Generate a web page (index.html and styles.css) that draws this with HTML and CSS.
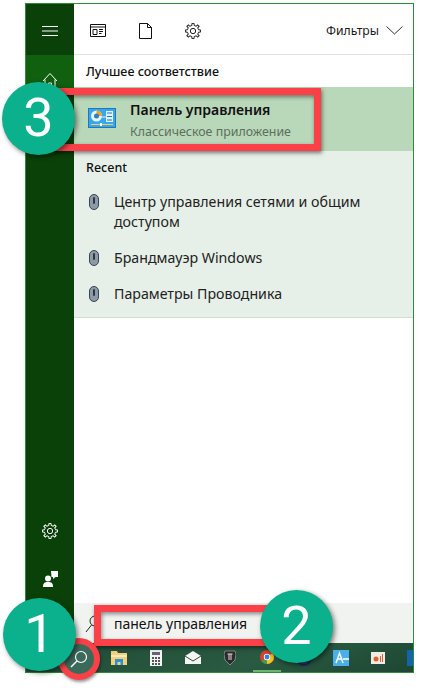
FILE: index.html
```html
<!DOCTYPE html>
<html lang="ru">
<head>
    <meta charset="UTF-8">
    <meta name="viewport" content="width=device-width, initial-scale=1.0">
    <title>Поиск</title>
    <link rel="stylesheet" href="styles.css">
</head>
<body>
    <div class="window">
        <div class="main">
            <!-- Левая панель -->
            <aside class="sidebar">
                <div class="side-menu">
                    <svg width="16" height="10" viewBox="0 0 16 10"><path d="M0 .5h16M0 5h16M0 9.500h16" stroke="#fff" fill="none"/></svg>
                </div>
                <div class="side-home">
                    <svg width="16" height="18" viewBox="0 0 16 18"><path d="M1 9 8 1.500 15 9M3 7.500V17h10V7.500M6.500 17v-6h3v6" stroke="#fff" fill="none"/></svg>
                </div>
                <div class="side-fill"></div>
                <div class="side-bottom">
                    <svg class="gear" width="16" height="16" viewBox="0 0 24 24"><use href="#gear"/></svg>
                    <svg class="feedback" width="15" height="16" viewBox="0 0 15 16"><circle cx="5" cy="7.500" r="3" fill="#fff"/><path d="M0 16c0-4 1.500-5 5-5s5 1 5 5z" fill="#fff"/><path d="M8 0h7v6h-2.500L10 8V6H8.500z" fill="#fff"/></svg>
                </div>
            </aside>

            <section class="content">
                <header class="tabs">
                    <svg class="tab-icon" width="16" height="13" viewBox="0 0 16 13"><path d="M.5.500h15v12H.5zM.5 3h15M3 5.500h4v5H3zM9 5.500h4M9 7.500h4M9 9.500h2.500" stroke="#111" fill="none"/></svg>
                    <svg class="tab-icon" width="13" height="16" viewBox="0 0 13 16"><path d="M.5.500h8l4 4v11H.5zM8.500.500v4h4" stroke="#111" fill="none"/></svg>
                    <svg class="tab-icon" width="16" height="16" viewBox="0 0 24 24"><use href="#gear-dark"/></svg>
                    <div class="filters">
                        <span>Фильтры</span>
                        <svg width="17" height="9" viewBox="0 0 17 9"><path d="M.5.500 8.500 8 16.500.500" stroke="#333" fill="none"/></svg>
                    </div>
                </header>

                <h2 class="best-title">Лучшее соответствие</h2>
                <div class="best-row">
                    <svg class="app-icon" width="28" height="20" viewBox="0 0 28 20">
                        <rect x=".5" y=".5" width="27" height="19" fill="#39a5ea" stroke="#1c78c0"/>
                        <circle cx="8.500" cy="8" r="5.500" fill="#e8f5fd"/>
                        <path d="M8.500 8V2.500A5.500 5.500 0 0 1 14 8z" fill="#f2a31c"/>
                        <circle cx="8.500" cy="8" r="2.500" fill="#2d7fc8"/>
                        <rect x="18" y="3" width="7" height="11" fill="#dff1fd"/>
                        <path d="M19 5h5M19 8.500h5M19 12h5" stroke="#2378bd"/>
                        <path d="M14 9h4" stroke="#dff1fd"/>
                        <path d="M3 16.500h22" stroke="#f4d35c"/>
                        <rect x="12" y="15" width="2" height="3" fill="#fff"/>
                    </svg>
                    <div class="best-text">
                        <div class="best-name">Панель управления</div>
                        <div class="best-type">Классическое приложение</div>
                    </div>
                </div>

                <div class="recent">
                    <h2 class="recent-title">Recent</h2>
                    <div class="recent-item">
                        <svg class="mouse" width="10" height="16" viewBox="0 0 10 16"><use href="#mouse"/></svg>
                        <span>Центр управления сетями и общим доступом</span>
                    </div>
                    <div class="recent-item">
                        <svg class="mouse" width="10" height="16" viewBox="0 0 10 16"><use href="#mouse"/></svg>
                        <span>Брандмауэр Windows</span>
                    </div>
                    <div class="recent-item">
                        <svg class="mouse" width="10" height="16" viewBox="0 0 10 16"><use href="#mouse"/></svg>
                        <span>Параметры Проводника</span>
                    </div>
                </div>

                <div class="content-fill"></div>

                <div class="search-box">
                    <svg width="16" height="20" viewBox="0 0 16 20"><circle cx="10" cy="7" r="5" stroke="#222" fill="none"/><path d="M6.500 11 1 18" stroke="#222" fill="none"/></svg>
                    <span>панель управления</span>
                </div>
            </section>
        </div>

        <!-- Панель задач -->
        <footer class="taskbar">
            <div class="task-search"></div>
            <svg class="task-icon" width="16" height="15" viewBox="0 0 16 15"><path d="M0 1h6l1 2h9v12H0z" fill="#f3d178"/><path d="M0 5h16v2H0z" fill="#fbeab8"/><path d="M4 9h8v6H9.500v-3h-3v3H4z" fill="#2a8fdc"/></svg>
            <svg class="task-icon" width="12" height="16" viewBox="0 0 12 16"><rect width="12" height="16" fill="#f4f4f4"/><rect x="2" y="2" width="8" height="3" fill="#667"/><path d="M2 7h2v2H2zM5 7h2v2H5zM8 7h2v2H8zM2 10h2v2H2zM5 10h2v2H5zM8 10h2v2H8zM2 13h2v2H2zM5 13h2v2H5zM8 13h2v2H8z" fill="#555"/></svg>
            <svg class="task-icon" width="16" height="13" viewBox="0 0 16 13"><path d="M0 5 8 0l8 5v8H0z" fill="#f4f4f4"/><path d="M0 5l8 5 8-5" stroke="#234e3a" fill="none"/></svg>
            <svg class="task-icon" width="12" height="15" viewBox="0 0 12 15"><path d="M1 1h10l1 3-1 6-5 5-5-5-1-6z" fill="#2b2b2b" stroke="#999" stroke-width=".8"/><path d="M3.500 4h5M5 4v6M7 4v6" stroke="#ddd"/></svg>
            <div class="chrome-wrap">
                <svg width="14" height="14" viewBox="0 0 14 14"><circle cx="7" cy="7" r="7" fill="#d9412f"/><path d="M7 7 1.500 11.500A7 7 0 0 0 7 14z" fill="#3aa04a"/><path d="M7 7 7 14A7 7 0 0 0 14 7 7 7 0 0 0 12.500 3z" fill="#f6c51c"/><circle cx="7" cy="7" r="3.200" fill="#fff"/><circle cx="7" cy="7" r="2.400" fill="#3a7fe6"/></svg>
            </div>
            <svg class="task-round" width="16" height="16" viewBox="0 0 16 16"><circle cx="8" cy="8" r="7" fill="#234e3a" stroke="#26246e" stroke-width="2"/></svg>
            <div class="taskbar-fill"></div>
            <svg class="task-letter" width="16" height="16" viewBox="0 0 16 16"><rect width="16" height="16" fill="#4bb0ea"/><path d="M3 13 6.500 3 10 13M4.500 9h4M10 9h6" stroke="#fff" fill="none" stroke-width="1.400"/></svg>
            <svg class="task-slide" width="14" height="12" viewBox="0 0 14 12"><rect width="14" height="12" fill="#f0ebe5"/><circle cx="5" cy="7" r="2.500" fill="#e0622a"/><path d="M9.500 4v6M11.500 2v8" stroke="#e0622a"/></svg>
            <div class="task-last"></div>
        </footer>
    </div>

    <!-- Пометки поверх скриншота -->
    <div class="mark mark-best"></div>
    <div class="mark mark-search"></div>
    <div class="mark-ring">
        <svg width="18" height="18" viewBox="0 0 18 18"><circle cx="11" cy="7" r="5.500" stroke="#fff" fill="none" stroke-width="1.200"/><path d="M7 11 1 17" stroke="#fff" fill="none" stroke-width="1.400"/></svg>
    </div>
    <div class="step step-1">1</div>
    <div class="step step-2">2</div>
    <div class="step step-3">3</div>

    <!-- Общие значки -->
    <svg class="defs" width="0" height="0">
        <defs>
            <path id="gear-tooth" d="M8.750 4.150 10.230 3.690 10.400.610H13.600L13.770 3.690 15.250 4.150"/>
            <g id="gear-shape">
                <use href="#gear-tooth"/>
                <use href="#gear-tooth" transform="rotate(45 12 12)"/>
                <use href="#gear-tooth" transform="rotate(90 12 12)"/>
                <use href="#gear-tooth" transform="rotate(135 12 12)"/>
                <use href="#gear-tooth" transform="rotate(180 12 12)"/>
                <use href="#gear-tooth" transform="rotate(225 12 12)"/>
                <use href="#gear-tooth" transform="rotate(270 12 12)"/>
                <use href="#gear-tooth" transform="rotate(315 12 12)"/>
                <circle cx="12" cy="12" r="4"/>
            </g>
            <g id="gear" fill="none" stroke="#fff" stroke-width="1.500"><use href="#gear-shape"/></g>
            <g id="gear-dark" fill="none" stroke="#222" stroke-width="1.500"><use href="#gear-shape"/></g>
            <g id="mouse">
                <rect x=".5" y=".5" width="9" height="15" rx="4.500" fill="#8d9aa8" stroke="#3b4450"/>
                <rect x="4" y="3" width="2" height="7" rx="1" fill="#2f3640"/>
            </g>
        </defs>
    </svg>
</body>
</html>
```

FILE: styles.css
```css
body {
    margin: 0;
    background-color: #fff;
    font-family: "Noto Sans", "Open Sans", sans-serif;
    color: #1a1a1a;
    height: 694px;
    overflow: hidden;
    position: relative;
}

.window {
    margin: 3px 0 0 25px;
    width: 387px;
    height: 668px;
    border: 1px solid #2f8c3a;
    display: flex;
    flex-direction: column;
}

.main {
    flex: 1;
    display: flex;
    min-height: 0;
}

/* Левая панель */
.sidebar {
    width: 48px;
    display: flex;
    flex-direction: column;
    background-color: #0a4108;
}

.side-menu {
    height: 51px;
    box-sizing: border-box;
    padding-top: 3px;
    display: flex;
    justify-content: center;
    align-items: center;
}

.side-home {
    height: 40px;
    box-sizing: border-box;
    padding-top: 17px;
    display: flex;
    justify-content: center;
    align-items: flex-start;
    background-color: #10600f;
}

.side-fill {
    flex: 1;
}

.side-bottom {
    height: 120px;
    display: flex;
    flex-direction: column;
    align-items: center;
    gap: 32px;
}

.content {
    flex: 1;
    display: flex;
    flex-direction: column;
    min-width: 0;
    background-color: #fff;
}

.tabs {
    height: 50px;
    box-sizing: content-box;
    border-bottom: 1px solid #e2e2e2;
    display: flex;
    align-items: center;
    padding: 0 10px 0 16px;
    gap: 33px;
}

.tabs svg {
    margin-top: 3px;
}

.tab-icon {
    flex: none;
}

.filters {
    margin-left: auto;
    margin-top: 3px;
    display: flex;
    align-items: center;
    gap: 7px;
    font-size: 12.200px;
}

.filters svg {
    margin-top: 0;
}

.best-title,
.recent-title {
    margin: 0;
    font-size: 12.500px;
    font-weight: 500;
    color: #111;
}

.best-title {
    height: 32px;
    line-height: 34px;
    padding-left: 12px;
}

.best-row {
    height: 64px;
    background-color: #b9d7b9;
    display: flex;
    align-items: center;
    padding-left: 14px;
    gap: 14px;
}

.app-icon {
    margin-top: -2px;
}

.best-text {
    padding-top: 6px;
}

.best-name {
    font-size: 14px;
    font-weight: 600;
    line-height: 20px;
    color: #111;
}

.best-type {
    font-size: 12.400px;
    line-height: 24px;
    color: #5c6f5c;
}

.recent {
    height: 166px;
    background-color: #e6f0e8;
    border-bottom: 1px solid #d2dfd4;
}

.recent-title {
    height: 39px;
    line-height: 34px;
    padding-left: 12px;
}

.recent-item {
    display: flex;
    align-items: flex-start;
    gap: 15px;
    padding: 2px 40px 14px 15px;
    font-size: 14.200px;
    line-height: 20px;
    color: #222;
}

.mouse {
    flex: none;
    margin-top: 2px;
}

.content-fill {
    flex: 1;
}

.search-box {
    height: 40px;
    box-sizing: border-box;
    padding: 1px 0 0 11px;
    background-color: #f1f3f0;
    display: flex;
    align-items: center;
    gap: 13px;
    font-size: 14px;
    color: #111;
}

/* Панель задач */
.taskbar {
    height: 29px;
    flex: none;
    display: flex;
    align-items: center;
    background: linear-gradient(160deg, #1f4a35 0%, #2a5a42 60%, #1d4632 100%);
}

.task-search {
    width: 85px;
    flex: none;
}

.task-icon {
    flex: none;
    margin-right: 23px;
}

.chrome-wrap {
    width: 28px;
    height: 29px;
    flex: none;
    box-sizing: border-box;
    border-bottom: 2px solid #6eb36e;
    display: flex;
    justify-content: center;
    align-items: center;
    margin-left: -6px;
}

.task-round {
    flex: none;
    margin-left: 15px;
}

.taskbar-fill {
    flex: 1;
}

.task-letter {
    margin-right: 22px;
}

.task-slide {
    margin-right: 22px;
}

.task-last {
    width: 6px;
    height: 16px;
    background-color: #1463ad;
}

/* Пометки */
.mark {
    position: absolute;
    box-sizing: border-box;
    border: 7px solid #fb4147;
    box-shadow: 1px 2px 4px rgba(0, 0, 0, 0.5), inset 1px 2px 4px rgba(0, 0, 0, 0.45);
}

.mark-best {
    left: 55px;
    top: 88px;
    width: 266px;
    height: 63px;
}

.mark-search {
    left: 94px;
    top: 605px;
    width: 180px;
    height: 41px;
}

.mark-ring {
    position: absolute;
    left: 58px;
    top: 638px;
    width: 42px;
    height: 42px;
    box-sizing: border-box;
    border: 6px solid #fb4147;
    border-radius: 50%;
    background-color: #3c6a5a;
    box-shadow: 1px 2px 3px rgba(0, 0, 0, 0.4);
    display: flex;
    justify-content: center;
    align-items: center;
}

.step {
    position: absolute;
    width: 73px;
    height: 73px;
    border-radius: 50%;
    background-color: #0bb08d;
    color: #fff;
    font-family: Roboto, "Open Sans", sans-serif;
    font-weight: 400;
    font-size: 54px;
    line-height: 71px;
    text-align: center;
    box-shadow: 2px 2px 5px rgba(0, 0, 0, 0.5);
}

.step-1 {
    left: 3px;
    top: 598px;
}

.step-2 {
    left: 260px;
    top: 590px;
}

.step-3 {
    left: 2px;
    top: 82px;
}

.defs {
    position: absolute;
}
```
